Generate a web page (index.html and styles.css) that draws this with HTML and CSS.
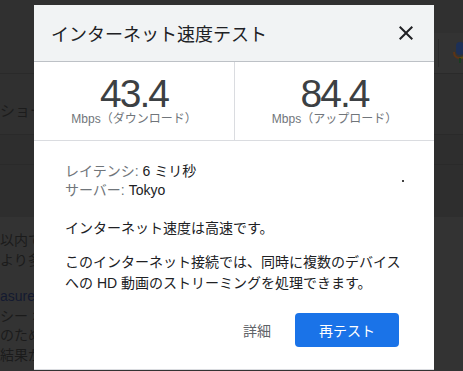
FILE: index.html
```html
<!DOCTYPE html>
<html lang="ja">
<head>
    <meta charset="UTF-8">
    <meta name="viewport" content="width=device-width, initial-scale=1.0">
    <title>インターネット速度テスト</title>
    <link rel="stylesheet" href="styles.css">
</head>
<body>
    <div class="page">
        <header class="page-head">
            <div class="head-tools">
                <span class="tools-divider"></span>
                <svg class="mic" width="14" height="22" viewBox="0 0 14 22">
                    <rect x="3" y="0" width="8" height="13" rx="4" fill="#1d3057"/>
                    <path d="M1 10 Q1 16 7 16" stroke="#5c3416" stroke-width="2" fill="none"/>
                    <path d="M13 10 Q13 16 7 16" stroke="#5a4a12" stroke-width="2" fill="none"/>
                    <rect x="6" y="16" width="2" height="5" fill="#1a3d22"/>
                </svg>
            </div>
        </header>
        <nav class="tabs"><span>ショー</span></nav>
        <div class="row-thin"></div>
        <div class="row-mid"></div>
        <div class="results">
            <p>以内で<br>より多</p>
            <p><a class="link">asurem</a><br>シー ポ<br>のため<br>結果が</p>
        </div>
    </div>

    <div class="dialog">
        <div class="dialog-head">
            <h1>インターネット速度テスト</h1>
            <svg class="close" width="24" height="24" viewBox="0 0 24 24">
                <path d="M19 6.41L17.59 5 12 10.59 6.41 5 5 6.41 10.59 12 5 17.59 6.41 19 12 13.41 17.59 19 19 17.59 13.41 12z" fill="#202124"/>
            </svg>
        </div>

        <div class="stats">
            <div class="stat">
                <div class="value">43.4</div>
                <div class="unit">Mbps（ダウンロード）</div>
            </div>
            <div class="stat">
                <div class="value">84.4</div>
                <div class="unit">Mbps（アップロード）</div>
            </div>
        </div>

        <div class="dialog-body">
            <div class="info">
                <div>
                    <div><span class="label">レイテンシ:</span> 6 ミリ秒</div>
                    <div><span class="label">サーバー:</span> Tokyo</div>
                </div>
                <span class="dot"></span>
            </div>
            <p class="verdict">インターネット速度は高速です。</p>
            <p class="detail">このインターネット接続では、同時に複数のデバイスへの HD 動画のストリーミングを処理できます。</p>
        </div>

        <div class="dialog-actions">
            <button class="link-btn">詳細</button>
            <button class="primary-btn">再テスト</button>
        </div>
    </div>
</body>
</html>
```

FILE: styles.css
```css
body {
    margin: 0;
    height: 371px;
    overflow: hidden;
    position: relative;
    background-color: #333;
    font-family: "Liberation Sans", "Noto Sans CJK JP", sans-serif;
}

/* page behind the dimmed overlay */
.page-head {
    height: 73px;
    background-color: #303030;
    border-bottom: 1px solid #2a2a2a;
    display: flex;
    justify-content: flex-end;
    align-items: flex-end;
}

.head-tools {
    width: 29px;
    height: 40px;
    background-color: #333;
    display: flex;
    align-items: center;
    padding-left: 4px;
    box-sizing: border-box;
    overflow: hidden;
}

.tools-divider {
    width: 1px;
    height: 28px;
    background-color: #2a2a2a;
    flex-shrink: 0;
}

.mic {
    flex-shrink: 0;
    margin-left: 14px;
}

.tabs {
    height: 61px;
    box-sizing: border-box;
    padding-top: 27px;
    background-color: #303030;
    border-bottom: 1px solid #2a2a2a;
    font-size: 15px;
    line-height: 20px;
    color: #1c1c1c;
    white-space: nowrap;
}

.row-thin {
    height: 29px;
    background-color: #2e2e2e;
    border-bottom: 1px solid #2a2a2a;
}

.row-mid {
    height: 52px;
    background-color: #2e2e2e;
}

.results {
    padding-top: 14px;
    font-size: 14px;
    line-height: 19.5px;
    color: #1b1b1b;
    white-space: nowrap;
}

.results p {
    margin: 0 0 17px;
}

.link {
    color: #141a30;
}

/* dialog */
.dialog {
    position: absolute;
    left: 34px;
    top: 5px;
    width: 400px;
    background: white;
    color: #202124;
}

.dialog-head {
    height: 56px;
    background-color: #f1f3f4;
    border-bottom: 1px solid #bdc1c6;
    display: flex;
    align-items: center;
    justify-content: space-between;
    padding: 0 16px 0 17px;
}

h1 {
    margin: 0;
    font-size: 18px;
    font-weight: normal;
    color: #202124;
}

.stats {
    display: flex;
    border-bottom: 1px solid #dadce0;
}

.stat {
    width: 200px;
    padding: 14px 0;
    text-align: center;
}

.stat + .stat {
    flex: 1;
    border-left: 1px solid #dadce0;
}

.value {
    font-size: 39px;
    line-height: 36px;
    letter-spacing: -2px;
    color: #3c4043;
}

.unit {
    font-size: 12px;
    line-height: 14px;
    color: #70757a;
}

.dialog-body {
    padding: 21px 30px 0 31px;
    font-size: 14px;
}

.info {
    display: flex;
    justify-content: space-between;
    align-items: center;
    line-height: 19px;
}

.label {
    color: #70757a;
}

.dot {
    width: 2px;
    height: 2px;
    background-color: #444;
}

.verdict {
    margin: 17.5px 0 0;
    line-height: 21px;
}

.detail {
    margin: 13.5px 0 0;
    line-height: 21px;
}

.dialog-actions {
    display: flex;
    justify-content: flex-end;
    align-items: center;
    padding: 18px 35px 21px;
    border-bottom: 1px solid #dadce0;
}

button {
    font-family: inherit;
    font-size: 14px;
    border: none;
    cursor: pointer;
}

.link-btn {
    background: none;
    color: #5f6368;
    padding: 8px;
    margin-right: 16px;
}

.primary-btn {
    width: 104px;
    height: 34px;
    border-radius: 4px;
    background-color: #1a73e8;
    color: white;
}
```
